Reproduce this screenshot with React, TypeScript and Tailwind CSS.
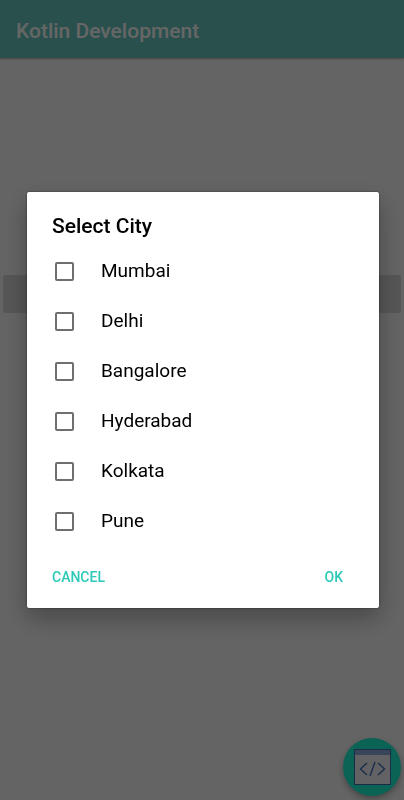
const cities = ["Mumbai", "Delhi", "Bangalore", "Hyderabad", "Kolkata", "Pune"];

function CodeIcon() {
  return (
    <svg viewBox="0 0 37 36" className="h-9 w-[37px]" fill="none" aria-hidden="true">
      <rect x="0.5" y="0.5" width="36" height="35" fill="#f4f6fa" stroke="#4070b8" />
      <rect x="1" y="1" width="35" height="5" fill="#90aee0" />
      <path
        d="M13 14 L6.5 20 L13 26 M24 14 L30.5 20 L24 26 M21 13 L16 27"
        stroke="#4070b8"
        strokeWidth="1.4"
      />
    </svg>
  );
}

function CityDialog() {
  return (
    <div
      role="dialog"
      aria-modal="true"
      aria-labelledby="dialog-title"
      className="flex w-full flex-col rounded-xs bg-white shadow-[0_10px_24px_rgba(0,0,0,0.3),0_0_2px_rgba(0,0,0,0.6)]"
    >
      <h2 id="dialog-title" className="px-[25px] pt-5 text-[21px] leading-7 font-medium text-black">
        Select City
      </h2>
      <ul className="mt-1.5 flex flex-col">
        {cities.map((city) => (
          <li key={city}>
            <label className="flex h-[50px] items-center gap-[27px] px-7 text-[19px] leading-7 text-black">
              <input
                type="checkbox"
                name="city"
                value={city}
                className="size-[19px] shrink-0 appearance-none rounded-xs border-2 border-[#6f6f6f] bg-white checked:border-[#26c6b5] checked:bg-[#26c6b5]"
              />
              {city}
            </label>
          </li>
        ))}
      </ul>
      <div className="flex items-center justify-between px-[25px] py-[21px] text-sm leading-5 font-medium text-[#2cc9b8]">
        <button type="button" className="uppercase">
          Cancel
        </button>
        <button type="button" className="mr-[11px] uppercase">
          OK
        </button>
      </div>
    </div>
  );
}

export default function App() {
  return (
    <div className="relative flex min-h-screen flex-col bg-[#fafafa] font-['Roboto',sans-serif]">
      <header className="flex h-[58px] items-center bg-[#67c8c0] px-4 pt-1 shadow-[0_1px_2px_rgba(0,0,0,0.3)]">
        <h1 className="text-[21px] leading-7 font-medium text-white">Kotlin Development</h1>
      </header>
      <main className="flex flex-1 flex-col px-[3px] pt-[217px]">
        <button type="button" aria-label="Select city" className="h-[38px] w-full rounded-xs bg-[#d6d7d7]" />
      </main>
      <button
        type="button"
        aria-label="View code"
        className="fixed right-[3px] bottom-1 flex size-[58px] items-center justify-center rounded-full bg-[#1bf7d5] shadow-[0_3px_6px_rgba(0,0,0,0.3)]"
      >
        <CodeIcon />
      </button>
      <div className="fixed inset-0 flex items-center justify-center bg-black/60 pr-[25px] pl-[27px]">
        <CityDialog />
      </div>
    </div>
  );
}
